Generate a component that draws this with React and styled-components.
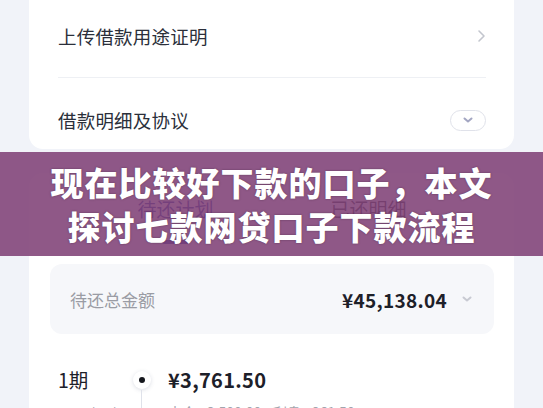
import React from "react";
import styled, { createGlobalStyle } from "styled-components";

const GlobalStyle = createGlobalStyle`
  body {
    margin: 0;
    background: #f1f3f9;
    font-family: "Noto Sans CJK SC", "Noto Sans", sans-serif;
  }
`

const Page = styled.div`
  position: relative;
  height: 408px;
  overflow: hidden;
  padding: 0 29px;
  box-sizing: border-box;
`

const Card = styled.div`
  background: #ffffff;
  border-radius: ${p => p.$top ? "14px" : "0 0 14px 14px"};
  padding: 0 28px 0 29px;
  margin-top: ${p => p.$gap || 0}px;
`

const Row = styled.div`
  display: flex;
  align-items: center;
  justify-content: space-between;
  height: ${p => p.$h}px;
  box-sizing: border-box;
  padding-top: ${p => p.$pt || 0}px;
  padding-bottom: ${p => p.$pb || 0}px;
`

const Label = styled.span`
  font-size: 18.5px;
  color: #2b2f3a;
  letter-spacing: 0.2px;
`

const Divider = styled.div`
  height: 1px;
  background: #eef0f4;
`

const Pill = styled.button`
  width: 36px;
  height: 21px;
  border: 1px solid #e0e2ea;
  border-radius: 11px;
  background: #fff;
  display: flex;
  align-items: center;
  justify-content: center;
  padding: 0;
`

const Tabs = styled.div`
  display: flex;
  justify-content: center;
  padding-top: 22px;
`

const Tab = styled.div`
  width: 193px;
  display: flex;
  flex-direction: column;
  align-items: center;
  font-size: 19px;
  color: ${p => p.$active ? "#2c3aa6" : "#33363f"};
  gap: 18px;
`

const Indicator = styled.div`
  width: 28px;
  height: 4px;
  border-radius: 2px;
  background: ${p => p.$show ? "#2c3aa6" : "transparent"};
`

const Summary = styled.div`
  margin: 20px -8px 0 -8px;
  height: 70px;
  background: #f6f7fa;
  border-radius: 12px;
  display: flex;
  align-items: center;
  padding: 0 21px 0 20px;
`

const SummaryLabel = styled.span`
  font-size: 17px;
  color: #9a9ca4;
  flex: 1;
`

const Total = styled.span`
  font-size: 19px;
  font-weight: 700;
  color: #1d2029;
  margin-right: 14px;
  letter-spacing: 0.3px;
`

const Period = styled.div`
  display: grid;
  grid-template-columns: 75px 35px 1fr;
  align-items: center;
  margin-top: 31px;
`

const PeriodName = styled.span`
  font-size: 19.5px;
  color: #1d2029;
`

const Dot = styled.div`
  position: relative;
  width: 18px;
  height: 18px;
  border-radius: 50%;
  background: #fff;
  box-shadow: 0 1px 4px rgba(60, 70, 110, 0.18);
  display: flex;
  align-items: center;
  justify-content: center;
  &::before {
    content: "";
    width: 6px;
    height: 6px;
    border-radius: 50%;
    background: #15171d;
  }
  &::after {
    content: "";
    position: absolute;
    left: 8px;
    top: 19px;
    width: 1px;
    height: 40px;
    background: #dfe2ea;
  }
`

const Amount = styled.span`
  font-size: 20px;
  font-weight: 700;
  color: #1d2029;
  letter-spacing: 0.3px;
`

const Detail = styled.div`
  display: grid;
  grid-template-columns: 110px 105px 1fr;
  font-size: 14px;
  color: #a2a5ad;
  margin-top: 8px;
`

const Banner = styled.div`
  position: absolute;
  left: 0;
  right: 0;
  top: 152px;
  height: 104px;
  background: rgba(128, 65, 118, 0.88);
  display: flex;
  flex-direction: column;
  align-items: center;
  justify-content: center;
  color: #ffffff;
  font-size: 33px;
  font-weight: 900;
  line-height: 44px;
  letter-spacing: 1px;
  text-shadow: 0 0 2px rgba(40, 20, 40, 0.5);
`

const ChevronRight = () => (
  <svg width="9" height="14" viewBox="0 0 9 14" fill="none">
    <path d="M2 2l5 5-5 5" stroke="#c3c6ce" strokeWidth="1.6" strokeLinecap="round" strokeLinejoin="round" />
  </svg>
)

const ChevronDown = ({ color = "#a3a6c2", w = 12 }) => (
  <svg width={w} height="8" viewBox="0 0 12 8" fill="none">
    <path d="M2.5 2.5l3.5 3 3.5-3" stroke={color} strokeWidth="2" strokeLinecap="round" strokeLinejoin="round" />
  </svg>
)

export default function App() {
  return (
    <>
      <GlobalStyle />
      <Page>
        <Card>
          <Row $h={77} $pb={5}>
            <Label>上传借款用途证明</Label>
            <ChevronRight />
          </Row>
          <Divider />
          <Row $h={71} $pt={13}>
            <Label>借款明细及协议</Label>
            <Pill><ChevronDown /></Pill>
          </Row>
        </Card>

        <Card $top $gap={24}>
          <Tabs>
            <Tab $active>待还计划<Indicator $show /></Tab>
            <Tab>已还明细<Indicator /></Tab>
          </Tabs>
          <Summary>
            <SummaryLabel>待还总金额</SummaryLabel>
            <Total>¥45,138.04</Total>
            <ChevronDown color="#c8cad2" />
          </Summary>
          <Period>
            <PeriodName>1期</PeriodName>
            <Dot />
            <Amount>¥3,761.50</Amount>
          </Period>
          <Detail>
            <span>2024/03/20</span>
            <span>本金 ¥3,500.00</span>
            <span>利息 ¥261.50</span>
          </Detail>
        </Card>

        <Banner>
          <div>现在比较好下款的口子，本文</div>
          <div>探讨七款网贷口子下款流程</div>
        </Banner>
      </Page>
    </>
  )
}
